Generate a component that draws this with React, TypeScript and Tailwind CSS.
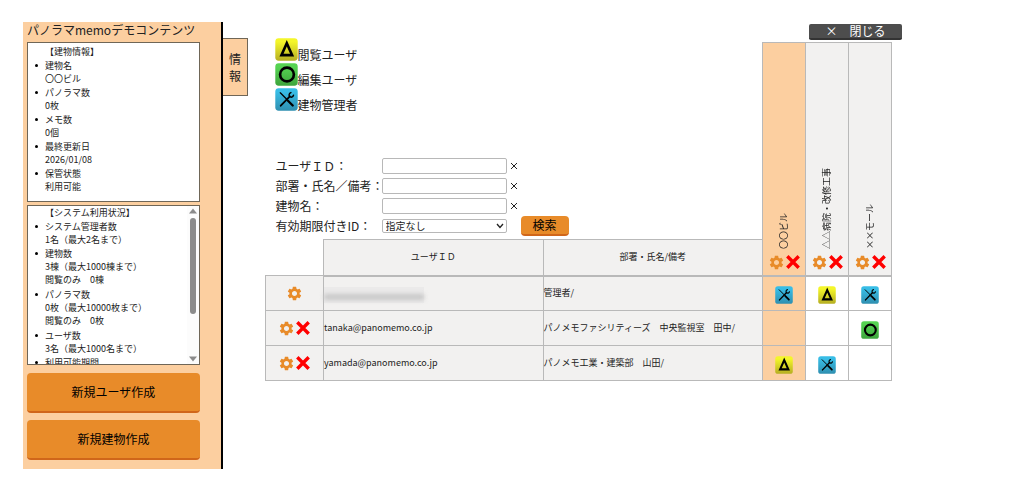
import React from 'react';
import { MdSettings } from 'react-icons/md';

type Role = 'view' | 'edit' | 'admin';

const buildings = [
  { name: '〇〇ビル', active: true },
  { name: '△△病院・改修工事', active: false },
  { name: '××モール', active: false },
];

const users: { id: string; dept: string; removable: boolean; roles: (Role | null)[] }[] = [
  { id: '', dept: '管理者/', removable: false, roles: ['admin', 'view', 'admin'] },
  { id: 'tanaka@panomemo.co.jp', dept: 'パノメモファシリティーズ　中央監視室　田中/', removable: true, roles: [null, null, 'edit'] },
  { id: 'yamada@panomemo.co.jp', dept: 'パノメモ工業・建築部　山田/', removable: true, roles: ['view', 'admin', null] },
];

const legend: { role: Role; label: string }[] = [
  { role: 'view', label: '閲覧ユーザ' },
  { role: 'edit', label: '編集ユーザ' },
  { role: 'admin', label: '建物管理者' },
];

const buildingInfo = [
  ['建物名', '〇〇ビル'],
  ['パノラマ数', '0枚'],
  ['メモ数', '0個'],
  ['最終更新日', '2026/01/08'],
  ['保管状態', '利用可能'],
];

const systemInfo = [
  ['システム管理者数', '1名（最大2名まで）'],
  ['建物数', '3棟（最大1000棟まで）', '閲覧のみ　0棟'],
  ['パノラマ数', '0枚（最大10000枚まで）', '閲覧のみ　0枚'],
  ['ユーザ数', '3名（最大1000名まで）'],
  ['利用可能期間'],
];

const roleColors = {
  view: ['#f4f62a', '#b5ae22'],
  edit: ['#56d352', '#3da43c'],
  admin: ['#38bde6', '#2f8fb0'],
};

const RoleIcon = ({ role, className }: { role: Role; className: string }) => (
  <svg viewBox="0 0 24 24" className={className} role="img" aria-label={role}>
    <defs>
      <linearGradient id={`grad-${role}`} x1="0" y1="0" x2="0" y2="1">
        <stop offset="0.15" stopColor={roleColors[role][0]} />
        <stop offset="1" stopColor={roleColors[role][1]} />
      </linearGradient>
    </defs>
    <rect x="0.3" y="0.3" width="23.4" height="23.4" rx="3.5" fill={`url(#grad-${role})`} />
    {role === 'view' && <path d="M12.3 5.5 17.8 17.8H6.8Z" fill="none" stroke="#000" strokeWidth="2.8" />}
    {role === 'edit' && <circle cx="12.5" cy="12" r="7.2" fill="none" stroke="#000" strokeWidth="2.8" />}
    {role === 'admin' && (
      <g fill="none" stroke="#000" strokeLinecap="round">
        <path d="M5.5 5 12.5 12" strokeWidth="1.3" />
        <path d="M13.5 13.3 18.5 18.3" strokeWidth="2.4" />
        <path d="M6 18.5 15.5 8.8" strokeWidth="1.9" />
        <path d="M16.6 4.8C14.6 5.4 14.2 7.6 15.3 8.9 16.6 10.1 18.8 9.6 19.3 7.6" strokeWidth="1.5" />
      </g>
    )}
  </svg>
);

const GearButton = () => (
  <button type="button" aria-label="設定" className="text-[#e88b29]">
    <MdSettings className="size-[17px]" />
  </button>
);

const DeleteButton = () => (
  <button type="button" aria-label="削除">
    <svg viewBox="0 0 16 16" className="size-4">
      <path d="M2.3 2.3 13.7 13.7M13.7 2.3 2.3 13.7" stroke="#f00" strokeWidth="3.4" />
    </svg>
  </button>
);

const InfoList = ({ title, items }: { title: string; items: string[][] }) => (
  <>
    <h2 className="pb-px pl-[17px]">【{title}】</h2>
    <ul className="pl-[7px]">
      {items.map((lines) => (
        <li
          key={lines[0]}
          className={`flex before:mt-[5px] before:mr-[7px] before:size-[3px] before:rounded-full before:bg-black ${
            lines.length > 2 ? 'pb-0.5' : 'pb-px'
          }`}
        >
          <div>
            {lines.map((line) => (
              <div key={line}>{line}</div>
            ))}
          </div>
        </li>
      ))}
    </ul>
  </>
);

const Sidebar = () => (
  <aside className="flex w-[200px] shrink-0 flex-col border-r-2 border-black bg-[#fccfa0] pr-[21px] pb-[9px] pl-1">
    <h1 className="h-5 whitespace-nowrap leading-4">パノラマmemoデモコンテンツ</h1>
    <section className="h-40 border border-[#6f6657] bg-white pt-0.5 text-[9px] leading-[13px]">
      <InfoList title="建物情報" items={buildingInfo} />
    </section>
    <section className="mt-[3px] flex h-40 border border-[#6f6657] bg-white text-[9px] leading-[13px]">
      <div className="flex-1 overflow-y-scroll [scrollbar-width:none]">
        <InfoList title="システム利用状況" items={systemInfo} />
      </div>
      <div className="flex w-3 flex-col items-center gap-1 bg-[#fcfcfc] py-[2px]">
        <svg viewBox="0 0 8 5" className="h-[6px] w-2 shrink-0">
          <path d="M4 0 8 5H0Z" fill="#8b8b8b" />
        </svg>
        <div className="h-24 w-[6px] rounded-full bg-[#8b8b8b]" />
        <svg viewBox="0 0 8 5" className="mt-auto h-[6px] w-2 shrink-0">
          <path d="M0 0H8L4 5Z" fill="#8b8b8b" />
        </svg>
      </div>
    </section>
    <div className="mt-2 flex flex-col gap-[7px]">
      {['新規ユーザ作成', '新規建物作成'].map((label) => (
        <button key={label} type="button" className="h-10 rounded border-b-2 border-[#d0661a] bg-[#e88b29] text-black">
          {label}
        </button>
      ))}
    </div>
  </aside>
);

const SearchForm = () => (
  <form className="flex flex-col whitespace-nowrap">
    {['ユーザＩＤ：', '部署・氏名／備考：', '建物名：'].map((label, i) => (
      <div key={label} className="flex h-5 items-center">
        <label htmlFor={`field-${i}`} className="w-[106px]">
          {label}
        </label>
        <input id={`field-${i}`} type="text" className="h-4 w-[125px] rounded-xs border border-[#b8b8b8] bg-white px-1 text-[10px]" />
        <button type="button" aria-label="クリア" className="ml-[3px]">
          <svg viewBox="0 0 8 8" className="size-2">
            <path d="M1 1 7 7M7 1 1 7" stroke="#222" />
          </svg>
        </button>
      </div>
    ))}
    <div className="flex h-5 items-center">
      <label htmlFor="limit" className="w-[106px]">
        有効期限付きID：
      </label>
      <div className="grid w-[125px] items-center">
        <select
          id="limit"
          className="col-start-1 row-start-1 h-[14px] appearance-none rounded-xs border border-[#b8b8b8] bg-white pl-[3px] text-[10px] leading-3"
        >
          <option>指定なし</option>
        </select>
        <svg viewBox="0 0 8 6" className="pointer-events-none col-start-1 row-start-1 mr-[3px] h-[6px] w-2 justify-self-end">
          <path d="M1 1 4 4.5 7 1" fill="none" stroke="#222" strokeWidth="1.3" />
        </svg>
      </div>
      <button type="submit" className="ml-[14px] h-5 w-12 rounded border-b-2 border-[#d0661a] bg-[#e88b29] leading-4 text-black">
        検索
      </button>
    </div>
  </form>
);

const UserTable = () => (
  <table className="w-full table-fixed border-collapse text-[9px]">
    <colgroup>
      <col className="w-[58px]" />
      <col />
      <col />
      <col className="w-[43px]" />
      <col className="w-[43px]" />
      <col className="w-[43px]" />
    </colgroup>
    <thead>
      <tr className="h-[197px]">
        <td colSpan={3} className="pl-[10px] align-top text-xs">
          <ul className="-mt-[5px] -ml-px">
            {legend.map(({ role, label }) => (
              <li key={role} className="flex h-[25px] items-end leading-4">
                <RoleIcon role={role} className="mb-[2px] size-[23px]" />
                {label}
              </li>
            ))}
          </ul>
          <div className="pt-[43px]">
            <SearchForm />
          </div>
        </td>
        {buildings.map(({ name, active }) => (
          <th
            key={name}
            rowSpan={2}
            className={`border border-b-2 border-[#b9b9b9] align-bottom font-normal ${active ? 'bg-[#fccfa0]' : 'bg-[#f2f1f0]'}`}
          >
            <div className="flex flex-col items-center gap-1 pb-1">
              <span className="rotate-180 whitespace-nowrap [text-orientation:sideways] [writing-mode:vertical-rl]">{name}</span>
              <span className="flex items-center">
                <GearButton />
                <DeleteButton />
              </span>
            </div>
          </th>
        ))}
      </tr>
      <tr className="h-9">
        <td />
        <th className="border border-b-2 border-[#b9b9b9] bg-[#f2f1f0] font-normal">ユーザＩＤ</th>
        <th className="border border-b-2 border-[#b9b9b9] bg-[#f2f1f0] font-normal">部署・氏名/備考</th>
      </tr>
    </thead>
    <tbody>
      {users.map(({ id, dept, removable, roles }) => (
        <tr key={dept} className="h-[35px]">
          <td className="border border-[#b9b9b9] bg-[#f2f1f0]">
            <div className="flex items-center justify-center">
              <GearButton />
              {removable && <DeleteButton />}
            </div>
          </td>
          <td className="border border-[#b9b9b9] bg-[#f2f1f0]">
            {id || (
              <div className="mt-1 flex h-4 w-[100px] items-center bg-[#ebeaea] pt-1">
                <div className="h-[6px] w-full bg-[#c8c8c8] blur-[2px]" />
              </div>
            )}
          </td>
          <td className="border border-[#b9b9b9] bg-[#f2f1f0]">{dept}</td>
          {roles.map((role, i) => (
            <td key={i} className={`border border-[#b9b9b9] pt-[3px] ${buildings[i].active ? 'bg-[#fccfa0]' : 'bg-white'}`}>
              {role && <RoleIcon role={role} className="mx-auto size-[18px]" />}
            </td>
          ))}
        </tr>
      ))}
    </tbody>
  </table>
);

const App: React.FC = () => {
  return (
    <div className="flex min-h-screen items-start bg-white pt-[22px] pl-[23px] font-['Noto_Sans_CJK_JP',sans-serif] text-xs text-[#222]">
      <Sidebar />
      <button
        type="button"
        className="mt-4 w-[25px] shrink-0 border border-l-0 border-[#6f6657] bg-[#fccfa0] py-[11px] leading-[17px]"
      >
        情<br />報
      </button>
      <main className="mr-[122px] ml-[17px] flex flex-1 flex-col pt-[2px]">
        <button type="button" className="h-4 w-[93px] self-end rounded-xs border-b-2 border-[#333] bg-[#4d4d4d] leading-[14px] text-white">
          ×　閉じる
        </button>
        <div className="mt-[2px] mr-[10px]">
          <UserTable />
        </div>
      </main>
    </div>
  );
};

export default App;
